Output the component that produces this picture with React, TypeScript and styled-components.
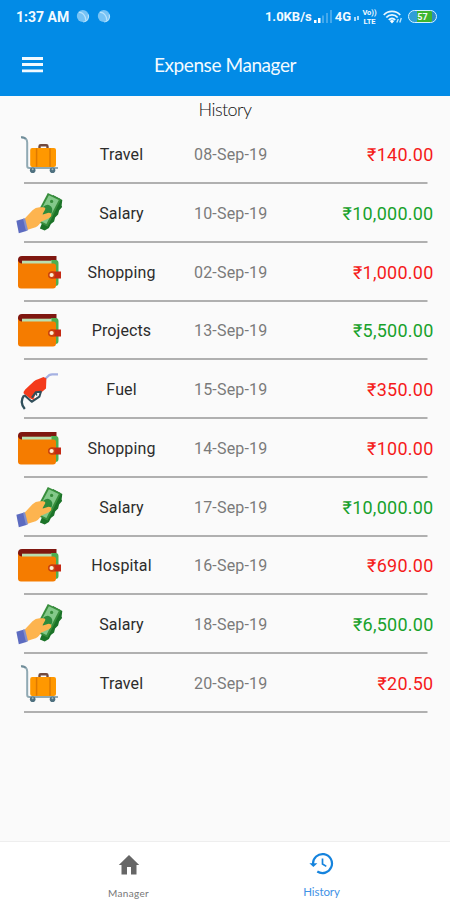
import React from 'react';
import styled, { createGlobalStyle } from 'styled-components';

const GlobalStyle = createGlobalStyle`
  * { box-sizing: border-box; }
  body { margin: 0; background: #fafafa; font-family: Roboto, sans-serif; }
`;

const Screen = styled.div`
  display: flex;
  flex-direction: column;
  width: 450px;
  height: 900px;
  background: #fafafa;
  overflow: hidden;
`;

const Header = styled.header`
  height: 96px;
  flex: none;
  background: #028be6;
  color: #f2faff;
`;

const StatusBar = styled.div`
  display: flex;
  align-items: center;
  justify-content: space-between;
  height: 33px;
  padding: 0 13px 0 16px;
`;

const StatusGroup = styled.div<{ $gap: number }>`
  display: flex;
  align-items: center;
  gap: ${(p) => p.$gap}px;
`;

const StatusText = styled.span<{ $size: number; $spacing?: number }>`
  font-size: ${(p) => p.$size}px;
  font-weight: 700;
  line-height: 18px;
  letter-spacing: ${(p) => p.$spacing ?? 0}px;
`;

const Volte = styled.span`
  display: flex;
  flex-direction: column;
  align-items: center;
  width: 15px;
  margin: 0 3px 0 1px;
  font-size: 7.5px;
  font-weight: 700;
  line-height: 9px;
`;

const Battery = styled.span`
  display: flex;
  align-items: center;
  justify-content: center;
  width: 29px;
  height: 13px;
  margin-left: 3px;
  border: 1.5px solid #d9f2ff;
  border-radius: 7px;
  background: linear-gradient(90deg, #2f9ed8 0 30%, #3fb52f 30% 84%, #2c8cc4 84%);
  background-clip: padding-box;
  font-size: 9px;
  font-weight: 700;
  line-height: 10px;
`;

const Toolbar = styled.div`
  display: grid;
  grid-template-columns: 66px 1fr 66px;
  align-items: center;
  height: 63px;
`;

const MenuButton = styled.button`
  display: flex;
  padding: 0 0 0 22px;
  border: 0;
  background: none;
  color: inherit;
`;

const Title = styled.h1`
  margin: 0;
  font: 400 19px/24px Lato, sans-serif;
  letter-spacing: -0.42px;
  text-align: center;
`;

const Content = styled.main`
  flex: 1;
  min-height: 0;
`;

const Heading = styled.h2`
  height: 29.4px;
  margin: 0;
  font: 300 18px/27px Lato, sans-serif;
  letter-spacing: -0.55px;
  text-align: center;
  color: #111;
`;

const List = styled.ul`
  margin: 0;
  padding: 0;
  list-style: none;
`;

const Row = styled.li`
  display: grid;
  grid-template-columns: 50px 79px 1fr auto;
  align-items: center;
  height: 58.75px;
  padding: 0.6px 16.5px 0 15px;
  background: linear-gradient(#b0b0b0, #b0b0b0) 24px 100% / 403.5px 2px no-repeat;
`;

const Category = styled.span`
  justify-self: center;
  margin-left: 34px;
  font-size: 16px;
  line-height: 20px;
  letter-spacing: 0.1px;
  white-space: nowrap;
  color: #2c2c2c;
`;

const DateText = styled.span`
  padding-left: 50px;
  font-size: 16px;
  line-height: 20px;
  letter-spacing: 0.18px;
  color: #7a7a7a;
`;

const Amount = styled.span<{ $income: boolean }>`
  font-size: 18px;
  line-height: 22px;
  letter-spacing: 0.25px;
  color: ${(p) => (p.$income ? '#18a12b' : '#f51a1a')};
`;

const BottomNav = styled.nav`
  display: grid;
  grid-template-columns: 1fr 1fr;
  height: 59px;
  flex: none;
  padding: 0 32px;
  border-top: 1px solid #eee;
  background: #fff;
`;

const NavItem = styled.div<{ $active?: boolean }>`
  display: flex;
  flex-direction: column;
  align-items: center;
  padding-top: ${(p) => (p.$active ? 10 : 13)}px;
  gap: ${(p) => (p.$active ? 10 : 11)}px;
  color: ${(p) => (p.$active ? '#1583dd' : '#666')};
`;

const NavLabel = styled.span<{ $active?: boolean }>`
  font: 400 ${(p) => (p.$active ? 11.5 : 10)}px/14px Lato, sans-serif;
  letter-spacing: ${(p) => (p.$active ? -0.1 : 0.35)}px;
  color: ${(p) => (p.$active ? '#3f92e6' : '#777')};
`;

const NoticeDot = () => (
  <svg width="14" height="15" viewBox="0 0 14 15">
    <circle cx="6.8" cy="7" r="6" fill="#77c3f5" />
    <path d="M3 3.5C6 3 10 6 10 12M12.2 5.5c1.5 4-1.5 7.5-5 7.5" fill="none" stroke="#b9e3fc" strokeWidth="1.2" />
  </svg>
);

const SignalIcon = () => (
  <svg width="18" height="13" viewBox="0 0 18 13">
    <path d="M0 10h2.5v3H0zM4 8h2.5v5H4z" fill="#fff" />
    <path d="M8 5.5h2V13H8zM12 3h2v10h-2zM16 0h2v13h-2z" fill="#45a9ec" />
  </svg>
);

const DataIcon = () => (
  <svg width="5" height="9" viewBox="0 0 5 9">
    <path d="M0 5h2v4H0zM3 4h2v4H3z" fill="#a8dafa" />
  </svg>
);

const WifiIcon = () => (
  <svg width="20" height="14" viewBox="0 0 20 14">
    <g fill="none" stroke="#e8f7ff" strokeWidth="1.8">
      <path d="M.8 5C5 .2 13 .2 17.2 5" />
      <path d="M3.3 7.5c3.2-3.6 8.2-3.6 11.4 0" />
      <path d="M5.8 10c1.8-2 4.6-2 6.4 0" />
    </g>
    <path d="M6.8 11 9 13.5l2.2-2.5q-2.2-1.8-4.4 0z" fill="#fff" />
    <path d="m13.8 12.5 1.5-3.5M16.8 12.5l1.5-4.5" stroke="#b9e3fc" strokeWidth="1.4" />
  </svg>
);

const MenuIcon = () => (
  <svg width="21" height="16" viewBox="0 0 21 16">
    <path d="M0 1.5h21M0 7.5h21M0 13.8h21" stroke="currentColor" strokeWidth="2.8" />
  </svg>
);

const LuggageIcon = () => (
  <svg width="48" height="44" viewBox="0 0 48 44">
    <path d="M6.5 4.5c4-.2 5.7 2 5.7 5V33q0 2 2 2H43" fill="none" stroke="#90a9b3" strokeWidth="2" />
    <path d="M6 4.2c2.3-.2 3.7.4 4.6 1.6" fill="none" stroke="#708d99" strokeWidth="2" />
    <path d="M24.5 15v-1.5q0-1.2 1.2-1.2h5.6q1.2 0 1.2 1.2V15" fill="none" stroke="#71493e" strokeWidth="2.4" />
    <rect x="15.2" y="15" width="25.8" height="19" rx="2" fill="#ff9800" />
    <path d="M21.6 15.2v18.5M35 15.2v18.5" stroke="#df7900" strokeWidth="1.5" />
    <circle cx="17.7" cy="37.2" r="2.8" fill="#4f7180" />
    <circle cx="37.5" cy="37.2" r="2.8" fill="#4f7180" />
    <circle cx="17.7" cy="36.3" r="1" fill="#9db6bf" />
    <circle cx="37.5" cy="36.3" r="1" fill="#9db6bf" />
  </svg>
);

const CashIcon = () => (
  <svg width="48" height="44" viewBox="0 0 48 44">
    <path d="m38 3 9.3 5-.7 5.5.5 1.5-3 3.5-1 4-3 3-1 4-3.2 2.5-2 4-4.2 2.6-4.8-2z" fill="#1b7328" />
    <path d="M32.8 1 46.2 7.2 32.6 34.5 18.6 28z" fill="#388e3c" />
    <path d="M33.9 3.2 43.8 8 31.4 32 21.2 27z" fill="#84c98a" />
    <ellipse cx="32" cy="18.5" rx="5.2" ry="5.8" transform="rotate(28 32 18.5)" fill="#2e8b3c" />
    <circle cx="36.6" cy="9.4" r="1.6" fill="#388e3c" />
    <path d="m8.8 27.5 8.7-9.2q3-3 7-3.1l3.6 0q3.1.4 1.9 2.5l-2.8 5 5.4-1.8q3.8-.6 3.8 2.1 0 2.3-4.7 4.3L26 29.7q-2.6 5.2-7.8 6.2L12 38z" fill="#fdb44f" />
    <path d="m1.4 28.7 7.8-2.2 3 12.3-8.4 2.5z" fill="#5c6bc0" />
    <path d="m8 26.8 2-.5 3 12-2 .6z" fill="#8490ca" />
  </svg>
);

const WalletIcon = () => (
  <svg width="48" height="44" viewBox="0 0 48 44">
    <path d="M3 9q0-4 4-4h34.5v8H7v5H3z" fill="#7f1710" />
    <path d="M7 9h33.5q3 0 3 3v20q0 3-3 3H36V9z" fill="#4caf50" />
    <path d="M7 9.7h29.5v4H7z" fill="#b9dfb0" />
    <path d="M3 9.5Q4 12.5 7 12.5h31.5q2.5 0 2.5 2.5v19.5q0 3-3 3H6q-3 0-3-3z" fill="#f57c00" />
    <path d="M37 20.5h9v7h-9a3.5 3.5 0 0 1 0-7z" fill="#c42a14" />
    <circle cx="36.6" cy="24" r="3.6" fill="#c9430d" />
    <circle cx="36.6" cy="24" r="2.1" fill="#ffeed6" />
  </svg>
);

const FuelIcon = () => (
  <svg width="48" height="44" viewBox="0 0 48 44">
    <path d="m30 11 4.5-4q1-.7 2.7-.7H43" fill="none" stroke="#a5b1e2" strokeWidth="2.3" />
    <path d="m28.5 9 2.9 1.4-.4 10.1-6 5-5.5 7q-5.5-2-10.8-7Q8 24 10.2 21.5L19 13.3q1.5-1.4 4.7-2.2z" fill="#f43a1b" />
    <path d="m18.5 31 2-5q1-2 3-2.2l2-.2-1.2 5z" fill="#fafafa" />
    <path d="m9.2 27 7.5 6.8 7.7-5.1 1.5-5-5 .5-4 5.5" fill="none" stroke="#304f5b" strokeWidth="2" strokeLinejoin="round" />
    <path d="m20.5 24 1.3 3.5" stroke="#304f5b" strokeWidth="1.5" />
    <path d="M9 27.5c-3 4-3 9 .8 13.5" fill="none" stroke="#304f5b" strokeWidth="2.3" />
  </svg>
);

const HomeIcon = () => (
  <svg width="22" height="20" viewBox="0 0 22 20">
    <path d="M11 0 21.2 10H18.5v9.5H13V12H9v7.5H3.5V10H.8z" fill="currentColor" />
  </svg>
);

const HistoryIcon = () => (
  <svg width="26" height="23" viewBox="0 0 26 23">
    <path d="M4 12a9.5 9.5 0 1 1 4.3 7.5" fill="none" stroke="currentColor" strokeWidth="2.2" />
    <path d="M.4 11.3h8L4.4 15z" fill="currentColor" />
    <path d="M13.5 6.5V12l3.8 2.4" fill="none" stroke="currentColor" strokeWidth="1.7" />
  </svg>
);

const icons = { luggage: LuggageIcon, cash: CashIcon, wallet: WalletIcon, fuel: FuelIcon };

interface Entry {
  icon: keyof typeof icons;
  name: string;
  date: string;
  amount: string;
  income?: boolean;
}

const entries: Entry[] = [
  { icon: 'luggage', name: 'Travel', date: '08-Sep-19', amount: '₹140.00' },
  { icon: 'cash', name: 'Salary', date: '10-Sep-19', amount: '₹10,000.00', income: true },
  { icon: 'wallet', name: 'Shopping', date: '02-Sep-19', amount: '₹1,000.00' },
  { icon: 'wallet', name: 'Projects', date: '13-Sep-19', amount: '₹5,500.00', income: true },
  { icon: 'fuel', name: 'Fuel', date: '15-Sep-19', amount: '₹350.00' },
  { icon: 'wallet', name: 'Shopping', date: '14-Sep-19', amount: '₹100.00' },
  { icon: 'cash', name: 'Salary', date: '17-Sep-19', amount: '₹10,000.00', income: true },
  { icon: 'wallet', name: 'Hospital', date: '16-Sep-19', amount: '₹690.00' },
  { icon: 'cash', name: 'Salary', date: '18-Sep-19', amount: '₹6,500.00', income: true },
  { icon: 'luggage', name: 'Travel', date: '20-Sep-19', amount: '₹20.50' },
];

export default function App() {
  return (
    <Screen>
      <GlobalStyle />
      <Header>
        <StatusBar>
          <StatusGroup $gap={7}>
            <StatusText $size={14}>1:37 AM</StatusText>
            <NoticeDot />
            <NoticeDot />
          </StatusGroup>
          <StatusGroup $gap={2.5}>
            <StatusText $size={13}>1.0KB/s</StatusText>
            <SignalIcon />
            <StatusText $size={13}>4G</StatusText>
            <DataIcon />
            <Volte>
              <span>Vo))</span>
              <span>LTE</span>
            </Volte>
            <WifiIcon />
            <Battery>57</Battery>
          </StatusGroup>
        </StatusBar>
        <Toolbar>
          <MenuButton aria-label="Menu">
            <MenuIcon />
          </MenuButton>
          <Title>Expense Manager</Title>
        </Toolbar>
      </Header>
      <Content>
        <Heading>History</Heading>
        <List>
          {entries.map((entry) => {
            const Icon = icons[entry.icon];
            return (
              <Row key={entry.date}>
                <Icon />
                <Category>{entry.name}</Category>
                <DateText>{entry.date}</DateText>
                <Amount $income={!!entry.income}>{entry.amount}</Amount>
              </Row>
            );
          })}
        </List>
      </Content>
      <BottomNav>
        <NavItem>
          <HomeIcon />
          <NavLabel>Manager</NavLabel>
        </NavItem>
        <NavItem $active>
          <HistoryIcon />
          <NavLabel $active>History</NavLabel>
        </NavItem>
      </BottomNav>
    </Screen>
  );
}
